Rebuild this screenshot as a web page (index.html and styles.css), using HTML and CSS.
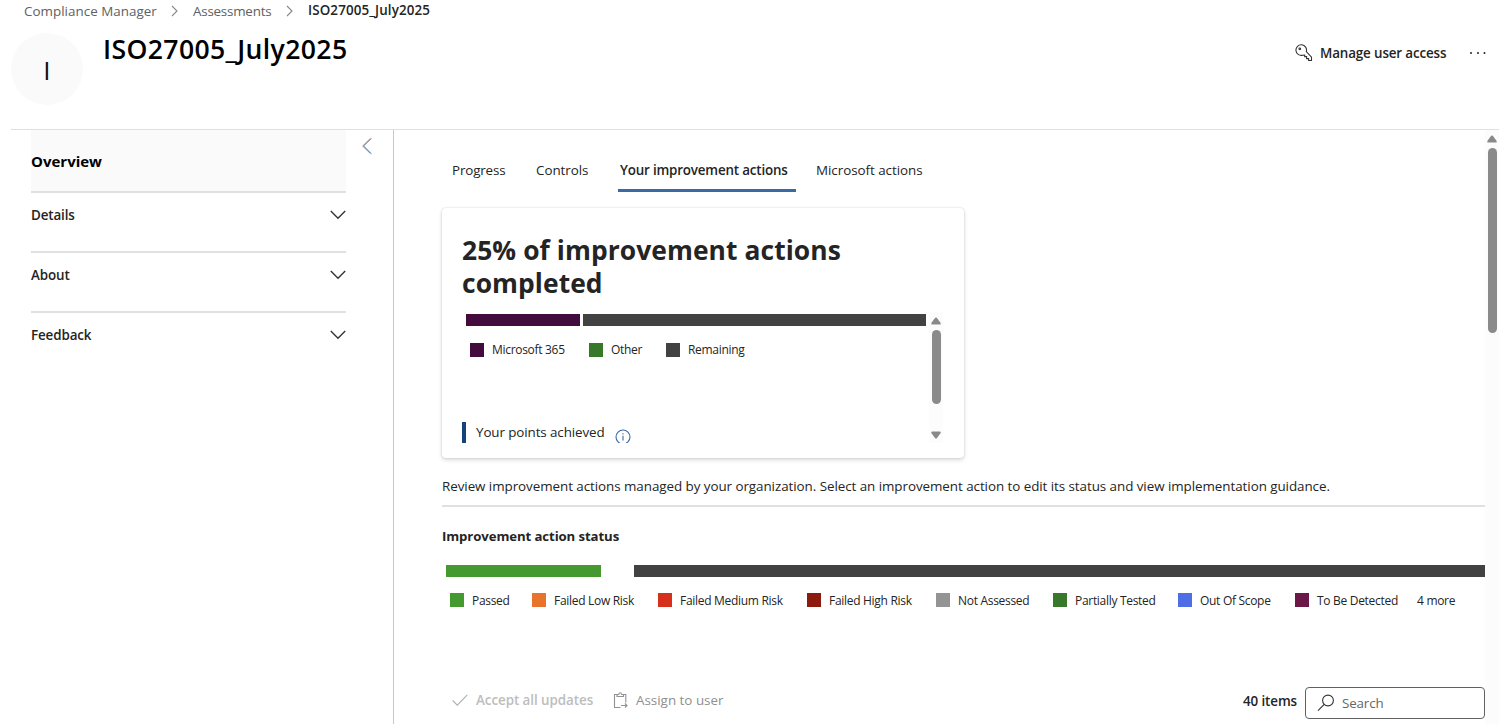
FILE: index.html
```html
<!DOCTYPE html>
<html lang="en">
<head>
<meta charset="utf-8">
<title>ISO27005_July2025 - Compliance Manager</title>
<link rel="stylesheet" href="styles.css">
</head>
<body>
<div class="page">
  <header class="header">
    <nav class="breadcrumb">
      <a class="crumb crumb-root">Compliance Manager</a>
      <svg class="crumb-sep" width="8" height="12" viewBox="0 0 8 12"><path d="M1 1l5 5-5 5"/></svg>
      <a class="crumb crumb-parent">Assessments</a>
      <svg class="crumb-sep" width="8" height="12" viewBox="0 0 8 12"><path d="M1 1l5 5-5 5"/></svg>
      <span class="crumb crumb-current">ISO27005_July2025</span>
    </nav>
    <div class="title-row">
      <div class="avatar">I</div>
      <h1 class="title">ISO27005_July2025</h1>
      <div class="commands">
        <svg class="key" width="18" height="18" viewBox="0 0 18 18"><path d="M7.6 11.2A5.3 5.3 0 1 1 11.3 7.6L16.5 13.1V16.5H13.6V14.6H11.6V12.6H9.7V11.1Z"/><circle cx="4.8" cy="4.8" r=".8"/></svg>
        <span class="manage">Manage user access</span>
        <svg class="more" width="18" height="4" viewBox="0 0 18 4"><circle cx="2" cy="2" r="1"/><circle cx="9" cy="2" r="1"/><circle cx="15.5" cy="2" r="1"/></svg>
      </div>
    </div>
  </header>
  <div class="body">
    <aside class="side">
      <div class="side-list">
        <div class="overview"><span>Overview</span></div>
        <div class="side-item"><span>Details</span><svg width="16" height="10" viewBox="0 0 16 10"><path d="M.8 1l7.2 7.2L15.2 1"/></svg></div>
        <div class="side-item"><span>About</span><svg width="16" height="10" viewBox="0 0 16 10"><path d="M.8 1l7.2 7.2L15.2 1"/></svg></div>
        <div class="side-item"><span>Feedback</span><svg width="16" height="10" viewBox="0 0 16 10"><path d="M.8 1l7.2 7.2L15.2 1"/></svg></div>
      </div>
      <svg class="collapse" width="10" height="17" viewBox="0 0 10 17"><path class="edge-warm" d="M8.5 .3L.7 8l7.8 7.7"/><path class="edge-cool" d="M9.5 .3L1.7 8l7.8 7.7"/></svg>
    </aside>
    <main class="main">
      <nav class="tabs">
        <a class="tab tab-progress">Progress</a>
        <a class="tab tab-controls">Controls</a>
        <a class="tab tab-yours">Your improvement actions</a>
        <a class="tab tab-ms">Microsoft actions</a>
      </nav>
      <section class="card">
        <h2 class="card-title">25% of improvement actions<br>completed</h2>
        <div class="card-scroll">
          <div class="card-content">
            <div class="bar"><i class="seg seg-m365"></i><i class="seg seg-remaining"></i></div>
            <div class="legend">
              <span class="key-item k-m365"><i class="sw purple"></i>Microsoft 365</span>
              <span class="key-item k-other"><i class="sw dkgreen"></i>Other</span>
              <span class="key-item"><i class="sw gray"></i>Remaining</span>
            </div>
            <div class="points"><span class="points-label">Your points achieved</span>
              <svg width="16" height="16" viewBox="0 0 16 16"><circle cx="8" cy="8" r="7"/><path d="M8 6.8v4.8M8 4.3v1.2"/></svg>
            </div>
          </div>
          <div class="scrollbar card-bar">
            <svg width="10" height="8" viewBox="0 0 10 8"><path d="M4.2 .8Q5 0 5.8 .8L9.7 6Q10 7.5 9 7.5H1Q0 7.5 .3 6Z"/></svg>
            <i class="thumb"></i>
            <svg class="down" width="10" height="8" viewBox="0 0 10 8"><path d="M4.2 7.2Q5 8 5.8 7.2L9.7 2Q10 .5 9 .5H1Q0 .5 .3 2Z"/></svg>
          </div>
        </div>
      </section>
      <p class="intro">Review improvement actions managed by your organization. Select an improvement action to edit its status and view implementation guidance.</p>
      <section class="status">
        <h3 class="status-title">Improvement action status</h3>
        <div class="bar status-bar"><i class="seg seg-passed"></i><i class="seg seg-rest"></i></div>
        <div class="legend status-legend">
          <span class="key-item s-passed"><i class="sw green"></i>Passed</span>
          <span class="key-item s-low"><i class="sw orange"></i>Failed Low Risk</span>
          <span class="key-item s-medium"><i class="sw red"></i>Failed Medium Risk</span>
          <span class="key-item s-high"><i class="sw maroon"></i>Failed High Risk</span>
          <span class="key-item s-not"><i class="sw silver"></i>Not Assessed</span>
          <span class="key-item s-part"><i class="sw dkgreen"></i>Partially Tested</span>
          <span class="key-item s-out"><i class="sw blue"></i>Out Of Scope</span>
          <span class="key-item s-detect"><i class="sw plum"></i>To Be Detected</span>
          <span class="key-item">4 more</span>
        </div>
      </section>
      <div class="toolbar">
        <div class="actions">
          <svg class="check" width="16" height="12" viewBox="0 0 16 12"><path d="M.7 6.5l4.6 4.6L15.3 .8"/></svg>
          <span class="accept">Accept all updates</span>
          <svg class="clip" width="15" height="17" viewBox="0 0 15 17"><path d="M4 2.5H1.5v13h6M10.5 2.5h2.3v8M4 4.5v-2h1.8Q6 .7 7.2 .7t1.4 1.8h1.9v2ZM8 13.5h6M12 11.5l2 2-2 2"/></svg>
          <span class="assign">Assign to user</span>
        </div>
        <span class="count">40 items</span>
        <div class="search"><svg width="18" height="18" viewBox="0 0 18 18"><circle cx="11" cy="6.5" r="5.4"/><path d="M7.2 10.4L1 16.6"/></svg><span>Search</span></div>
      </div>
    </main>
    <div class="scrollbar page-bar">
      <svg width="10" height="8" viewBox="0 0 10 8"><path d="M4.2 .8Q5 0 5.8 .8L9.7 6Q10 7.5 9 7.5H1Q0 7.5 .3 6Z"/></svg>
      <i class="thumb"></i>
    </div>
  </div>
</div>
</body>
</html>
```
FILE: styles.css
```css
* { box-sizing: border-box; }
body {
  margin: 0;
  background: #fff;
  color: #242424;
  font: 13.4px/20px "Open Sans", "Noto Sans", sans-serif;
}
svg { display: block; flex: none; fill: none; stroke: #333; stroke-width: 1.1; }
i { display: block; flex: none; }
h1, h2, h3, p { margin: 0; }
.page {
  height: 724px;
  padding: 0 4px 0 11px;
  display: flex;
  flex-direction: column;
  overflow: hidden;
  white-space: nowrap;
}
.header { flex: none; height: 130px; border-bottom: 1px solid #e0e0e0; }

/* Breadcrumb */
.breadcrumb { height: 22px; display: flex; align-items: center; padding-left: 13px; }
.crumb { color: #616161; }
.crumb-root { width: 147px; letter-spacing: .03px; }
.crumb-parent { width: 87px; margin-left: 14px; letter-spacing: -.25px; }
.crumb-sep { stroke: #888; }
.crumb-parent { letter-spacing: -.22px; }
.crumb-current { margin: -2px 0 0 14px; color: #242424; font-weight: 600; letter-spacing: .12px; }
.crumb-parent + .crumb-sep { margin-left: 6px; }

/* Title */
.title-row { display: flex; padding-top: 11px; }
.avatar {
  width: 72px;
  height: 72px;
  border-radius: 50%;
  background: #fafafa;
  text-align: center;
  font-size: 26px;
  line-height: 74px;
  color: #111;
}
.title { margin: -2px 0 0 20px; font-size: 26.6px; line-height: 36px; font-weight: 600; letter-spacing: .36px; color: #000; }
.commands { margin-left: auto; height: 40px; display: flex; align-items: center; padding-right: 12px; }
.manage { width: 127px; margin: 0 22px 0 7px; font-weight: 600; letter-spacing: -.14px; }
.more { fill: #242424; stroke: none; }

/* Side panel */
.body { flex: 1; min-height: 0; display: flex; }
.side { width: 383px; flex: none; padding-left: 20px; border-right: 1px solid #c8c8c8; display: flex; align-items: flex-start; }
.side-list { width: 315px; }
.overview {
  height: 63px;
  padding-top: 21px;
  background: #fafafa;
  border-bottom: 2px solid #e0e0e0;
  color: #000;
  font-size: 15px;
  font-weight: 700;
}
.side-item {
  height: 60px;
  padding-top: 12px;
  border-bottom: 2px solid #e0e0e0;
  display: flex;
  justify-content: space-between;
  font-weight: 600;
  letter-spacing: -.12px;
}
.side-item:last-child { border: 0; }
.side-item svg { margin-top: 5px; stroke-width: 1.4; }
.collapse { margin: 8px 0 0 16px; }
.edge-warm { stroke: #b0622f; stroke-width: .8; }
.edge-cool { stroke: #2f78c8; stroke-width: .8; }

/* Tabs */
.main { flex: 1; min-width: 0; padding-left: 48px; display: flex; flex-direction: column; }
.tabs { height: 62px; flex: none; display: flex; padding-top: 30px; }
.tab { height: 32px; letter-spacing: -.04px; }
.tab-progress { width: 84px; padding-left: 10px; letter-spacing: -.15px; }
.tab-controls { width: 92px; padding-left: 10px; }
.tab-yours { width: 178px; padding-left: 2px; border-bottom: 3px solid #3a69a4; font-weight: 600; letter-spacing: -.18px; }
.tab-ms { margin-left: 20px; }

/* Completion card */
.card {
  flex: none;
  width: 522px;
  height: 250px;
  margin-top: 16px;
  padding: 26px 20px 15px;
  border-radius: 4px;
  background: #fff;
  box-shadow: 0 0 2px rgba(0,0,0,.16), 0 2px 4px rgba(0,0,0,.15);
}
.card-title { font-size: 26.4px; line-height: 33px; font-weight: 700; letter-spacing: .08px; }
.card-scroll { display: flex; height: 131px; margin-top: 12px; overflow: hidden; }
.card-content { width: 467px; flex: none; padding: 2px 0 0 4px; }
.bar { display: flex; height: 12px; }
.seg { height: 12px; }
.seg-m365 { width: 114px; margin-right: 3px; background: #440c3e; }
.seg-remaining { width: 343px; background: #424242; }
.legend { display: flex; align-items: center; height: 20px; margin-top: 14px; padding-left: 4px; font-size: 12px; letter-spacing: -.3px; }
.key-item { display: flex; align-items: center; flex: none; }
.sw { width: 14px; height: 14px; margin: -1px 8px 0 0; }
.k-m365 { width: 119px; }
.k-other { width: 77px; }
.purple { background: #440c3e; }
.dkgreen { background: #37782a; }
.gray { background: #424242; }
.green { background: #44992f; }
.orange { background: #e8732d; }
.red { background: #d6301c; }
.maroon { background: #8c1a0e; }
.silver { background: #949494; }
.blue { background: #4f6ee6; }
.plum { background: #6b1748; }
.points { display: flex; margin: 62px 0 0 -4px; height: 24px; padding-left: 10px; border-left: 4px solid #14437a; }
.points-label { width: 139px; letter-spacing: -.1px; }
.points svg { margin-top: 7px; stroke: #3a69a4; }
.scrollbar { width: 14px; flex: none; background: #fcfcfc; display: flex; flex-direction: column; align-items: center; }
.scrollbar svg { flex: none; fill: #898989; stroke: none; }
.thumb { border-radius: 5px; background: #8a8a8a; }
.card-bar { padding: 5px 0 4px; }
.card-bar .thumb { width: 9px; height: 74px; margin-top: 5px; }
.down { margin-top: auto; }

/* Status */
.intro { margin-top: 18px; height: 31px; flex: none; border-bottom: 2px solid #e0e0e0; letter-spacing: -.053px; }
.status { padding-top: 19px; flex: none; }
.status-title { font-size: 13.2px; line-height: 20px; font-weight: 700; letter-spacing: -.1px; }
.status-bar { margin: 19px 0 0 4px; }
.seg-passed { width: 155px; margin-right: 33px; background: #44992f; }
.seg-rest { width: 851px; background: #424242; }
.status-legend { margin-top: 14px; padding-left: 8px; }
.status-legend .sw { margin-top: -2px; }
.s-passed { width: 82px; }
.s-low { width: 126px; }
.s-medium { width: 149px; }
.s-high { width: 129px; }
.s-not { width: 117px; }
.s-part { width: 125px; }
.s-out { width: 117px; }
.s-detect { width: 122px; }

/* Toolbar */
.toolbar { display: flex; align-items: center; height: 32px; margin-top: 76px; padding-left: 10px; flex: none; }
.actions { display: flex; align-items: center; padding-bottom: 6px; color: #8f8f8f; }
.check { stroke: #b0b0b0; }
.clip { stroke: #929292; }
.accept { width: 137px; margin-left: 8px; color: #bdbdbd; font-weight: 600; letter-spacing: -.06px; }
.assign { margin-left: 8px; }
.count { width: 55px; margin: 0 7px 0 auto; padding-bottom: 4px; font-weight: 600; letter-spacing: -.1px; }
.search {
  width: 180px;
  height: 32px;
  border: 1px solid #616161;
  border-radius: 4px;
  display: flex;
  align-items: center;
  padding-left: 11px;
  gap: 7px;
  color: #666;
  letter-spacing: -.15px;
}
.page-bar { padding-top: 5px; }
.page-bar .thumb { width: 9px; height: 185px; margin-top: 5px; }
```
